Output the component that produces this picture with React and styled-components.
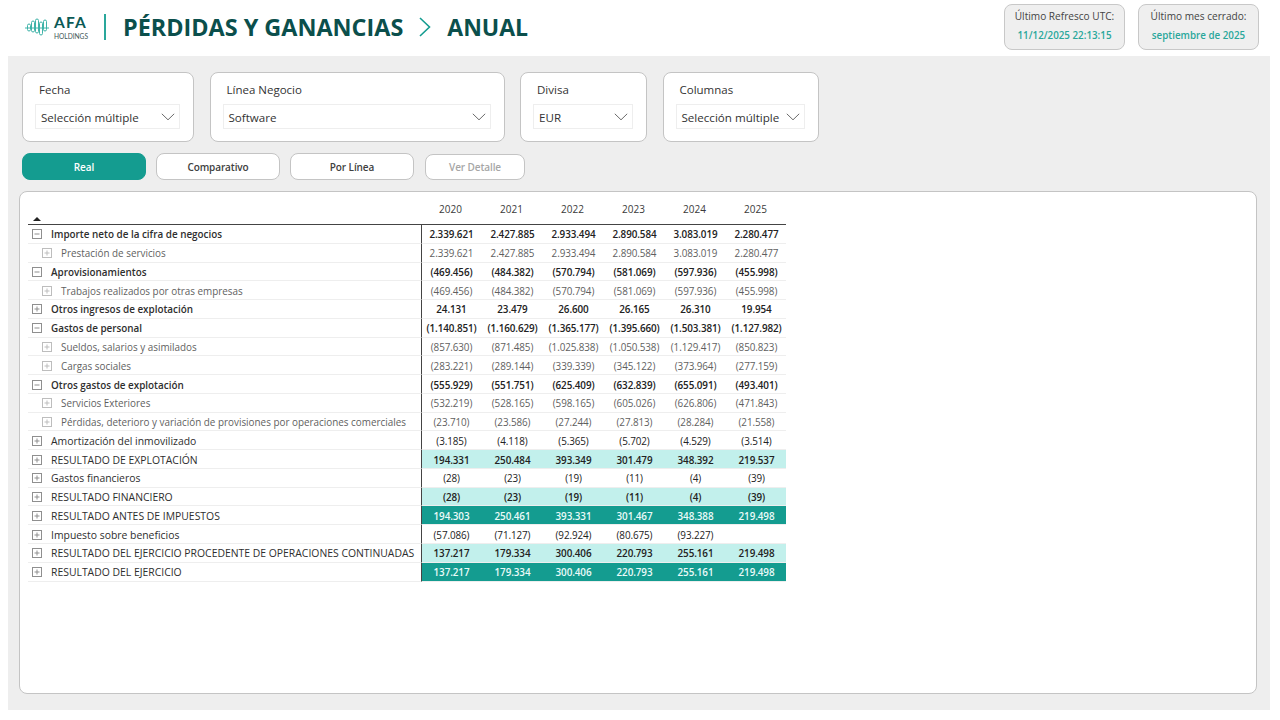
import React from 'react';
import styled, { createGlobalStyle } from 'styled-components';

const GlobalStyle = createGlobalStyle`
html, body {
  margin: 0;
  background: #ffffff;
  font-family: 'Open Sans', 'Noto Sans', sans-serif;
}
* { box-sizing: border-box; }
`

const YEARS = [2020, 2021, 2022, 2023, 2024, 2025];

const rows = [
  { label: 'Importe neto de la cifra de negocios', open: true, bold: true, values: ['2.339.621', '2.427.885', '2.933.494', '2.890.584', '3.083.019', '2.280.477'] },
  { label: 'Prestación de servicios', child: true, values: ['2.339.621', '2.427.885', '2.933.494', '2.890.584', '3.083.019', '2.280.477'] },
  { label: 'Aprovisionamientos', open: true, bold: true, values: ['(469.456)', '(484.382)', '(570.794)', '(581.069)', '(597.936)', '(455.998)'] },
  { label: 'Trabajos realizados por otras empresas', child: true, values: ['(469.456)', '(484.382)', '(570.794)', '(581.069)', '(597.936)', '(455.998)'] },
  { label: 'Otros ingresos de explotación', bold: true, values: ['24.131', '23.479', '26.600', '26.165', '26.310', '19.954'] },
  { label: 'Gastos de personal', open: true, bold: true, values: ['(1.140.851)', '(1.160.629)', '(1.365.177)', '(1.395.660)', '(1.503.381)', '(1.127.982)'] },
  { label: 'Sueldos, salarios y asimilados', child: true, values: ['(857.630)', '(871.485)', '(1.025.838)', '(1.050.538)', '(1.129.417)', '(850.823)'] },
  { label: 'Cargas sociales', child: true, values: ['(283.221)', '(289.144)', '(339.339)', '(345.122)', '(373.964)', '(277.159)'] },
  { label: 'Otros gastos de explotación', open: true, bold: true, values: ['(555.929)', '(551.751)', '(625.409)', '(632.839)', '(655.091)', '(493.401)'] },
  { label: 'Servicios Exteriores', child: true, values: ['(532.219)', '(528.165)', '(598.165)', '(605.026)', '(626.806)', '(471.843)'] },
  { label: 'Pérdidas, deterioro y variación de provisiones por operaciones comerciales', child: true, values: ['(23.710)', '(23.586)', '(27.244)', '(27.813)', '(28.284)', '(21.558)'] },
  { label: 'Amortización del inmovilizado', medium: true, values: ['(3.185)', '(4.118)', '(5.365)', '(5.702)', '(4.529)', '(3.514)'] },
  { label: 'RESULTADO DE EXPLOTACIÓN', medium: true, tone: 'light', values: ['194.331', '250.484', '393.349', '301.479', '348.392', '219.537'] },
  { label: 'Gastos financieros', medium: true, values: ['(28)', '(23)', '(19)', '(11)', '(4)', '(39)'] },
  { label: 'RESULTADO FINANCIERO', medium: true, tone: 'light', values: ['(28)', '(23)', '(19)', '(11)', '(4)', '(39)'] },
  { label: 'RESULTADO ANTES DE IMPUESTOS', medium: true, tone: 'dark', values: ['194.303', '250.461', '393.331', '301.467', '348.388', '219.498'] },
  { label: 'Impuesto sobre beneficios', medium: true, values: ['(57.086)', '(71.127)', '(92.924)', '(80.675)', '(93.227)', ''] },
  { label: 'RESULTADO DEL EJERCICIO PROCEDENTE DE OPERACIONES CONTINUADAS', medium: true, tone: 'light', values: ['137.217', '179.334', '300.406', '220.793', '255.161', '219.498'] },
  { label: 'RESULTADO DEL EJERCICIO', medium: true, tone: 'dark', values: ['137.217', '179.334', '300.406', '220.793', '255.161', '219.498'] },
];

const filters = [
  { title: 'Fecha', value: 'Selección múltiple', width: 172 },
  { title: 'Línea Negocio', value: 'Software', width: 295 },
  { title: 'Divisa', value: 'EUR', width: 127 },
  { title: 'Columnas', value: 'Selección múltiple', width: 156 },
];

// pillars of the logo wave: x, top, height
const wavePillars = [
  [2.5, 6, 7], [6.5, 3, 11], [10.5, 1, 14], [14.5, 4, 13], [18.5, 2, 11],
];

function Logo() {
  return (
    <LogoWrap>
      <svg width="24" height="18" viewBox="0 0 24 18" fill="none" stroke="#3fb3a8" strokeWidth="1">
        {wavePillars.map(([x, y, h]) => (
          <rect key={x} x={x} y={y} width="3" height={h} rx="1.5" />
        ))}
        <path d="M0 10 H24" />
      </svg>
      <LogoText>
        <LogoName>AFA</LogoName>
        <LogoSub>HOLDINGS</LogoSub>
      </LogoText>
    </LogoWrap>
  );
}

function Chevron() {
  return (
    <svg width="14" height="8" viewBox="0 0 14 8" fill="none" stroke="#6b6b6b" strokeWidth="1">
      <path d="M0.8 0.8 L7 6.8 L13.2 0.8" />
    </svg>
  );
}

function Expander({ open, faint }) {
  const color = faint ? '#bdbdbd' : '#8f8f8f';
  return (
    <ExpanderWrap>
      <svg width="10" height="10" viewBox="0 0 10 10" fill="none" stroke={color} strokeWidth="1">
        <rect x="0.5" y="0.5" width="9" height="9" />
        <path d="M2.5 5 H7.5" />
        {!open && <path d="M5 2.5 V7.5" />}
      </svg>
    </ExpanderWrap>
  );
}

export default function App() {
  return (
    <>
      <GlobalStyle />
      <Page>
        <Header>
          <TitleGroup>
            <Logo />
            <Divider />
            <Title>PÉRDIDAS Y GANANCIAS</Title>
            <svg width="12" height="20" viewBox="0 0 12 20" fill="none" stroke="#149c90" strokeWidth="1.6">
              <path d="M1 1 L10.5 10 L1 19" />
            </svg>
            <Title>ANUAL</Title>
          </TitleGroup>
          <StatusGroup>
            <StatusCard>
              <StatusLabel>Último Refresco UTC:</StatusLabel>
              <StatusValue>11/12/2025 22:13:15</StatusValue>
            </StatusCard>
            <StatusCard>
              <StatusLabel>Último mes cerrado:</StatusLabel>
              <StatusValue>septiembre de 2025</StatusValue>
            </StatusCard>
          </StatusGroup>
        </Header>
        <Panel>
          <FilterRow>
            {filters.map(({ title, value, width }) => (
              <FilterCard key={title} $width={width}>
                <FilterTitle>{title}</FilterTitle>
                <FilterSelect>
                  <span>{value}</span>
                  <Chevron />
                </FilterSelect>
              </FilterCard>
            ))}
          </FilterRow>
          <ButtonRow>
            <TabButton $active>Real</TabButton>
            <TabButton>Comparativo</TabButton>
            <TabButton>Por Línea</TabButton>
            <TabButton $disabled>Ver Detalle</TabButton>
          </ButtonRow>
          <TablePanel>
            <Matrix>
              <HeaderRow>
                <SortCell><SortCaret /></SortCell>
                {YEARS.map((year) => <YearCell key={year}>{year}</YearCell>)}
              </HeaderRow>
              {rows.map((row) => (
                <Row key={row.label}>
                  <LabelCell $child={row.child} $bold={row.bold} $medium={row.medium}>
                    <Expander open={row.open} faint={row.child} />
                    <span>{row.label}</span>
                  </LabelCell>
                  <Values $tone={row.tone}>
                    {row.values.map((value, i) => (
                      <ValueCell key={i} $child={row.child} $medium={row.medium} $tone={row.tone}>{value}</ValueCell>
                    ))}
                  </Values>
                </Row>
              ))}
            </Matrix>
          </TablePanel>
        </Panel>
      </Page>
    </>
  );
}

const Page = styled.div`
width: 1280px;
height: 720px;
overflow: hidden;
background: #ffffff;
`
const Header = styled.header`
height: 56px;
display: flex;
justify-content: space-between;
padding: 4px 21px 0 25px;
`
const TitleGroup = styled.div`
display: flex;
align-items: center;
height: 46px;
`
const LogoWrap = styled.div`
display: flex;
align-items: center;
gap: 5px;
`
const LogoText = styled.div`
display: flex;
flex-direction: column;
align-items: flex-start;
gap: 3px;
width: 33px;
padding-top: 1px;
font-family: 'Lato', 'Open Sans', sans-serif;
`
const LogoName = styled.span`
font-size: 15.5px;
line-height: 14px;
font-weight: 700;
letter-spacing: 1.2px;
color: #0b5a56;
`
const LogoSub = styled.span`
font-size: 6.6px;
line-height: 8px;
color: #3c5554;
`
const Divider = styled.div`
width: 2px;
height: 26px;
margin: 0 17px;
background: #2aa79b;
`
const Title = styled.h1`
margin: 0 16px 0 0;
font-size: 23.4px;
font-weight: 700;
color: #0b4f4c;
white-space: nowrap;
&:last-child { margin: 0 0 0 16px; font-size: 23px; }
`
const StatusGroup = styled.div`
display: flex;
gap: 13px;
`
const StatusCard = styled.div`
width: 121px;
height: 46px;
padding-top: 4px;
text-align: center;
background: #efefef;
border: 1px solid #c8c8c8;
border-radius: 8px;
`
const StatusLabel = styled.div`
font-size: 10.1px;
line-height: 14px;
white-space: nowrap;
color: #444444;
`
const StatusValue = styled.div`
margin-top: 6px;
font-size: 9.8px;
line-height: 14px;
font-weight: 600;
color: #2aa79b;
`
const Panel = styled.main`
width: 1262px;
height: 654px;
margin-left: 8px;
padding: 16px 13px 16px 14px;
background: #eeeeee;
`
const FilterRow = styled.div`
display: flex;
gap: 15.5px;
`
const FilterCard = styled.section`
width: ${(p) => p.$width}px;
height: 70px;
padding: 9px 13px 0;
background: #ffffff;
border: 1px solid #c4c4c4;
border-radius: 8px;
`
const FilterTitle = styled.div`
padding-left: 3px;
font-size: 11.5px;
line-height: 15px;
font-weight: 500;
color: #333333;
`
const FilterSelect = styled.div`
display: flex;
align-items: center;
justify-content: space-between;
height: 25px;
margin: 7px 0 0 -1px;
padding: 1px 4px 0 5px;
font-size: 11.6px;
font-weight: 500;
white-space: nowrap;
color: #333333;
border: 1px solid #eeeeee;
`
const ButtonRow = styled.div`
display: flex;
align-items: center;
gap: 10px;
margin-top: 11px;
`
const TabButton = styled.div`
display: flex;
align-items: center;
justify-content: center;
width: ${(p) => (p.$disabled ? 100 : 124)}px;
height: ${(p) => (p.$disabled ? 26 : 27)}px;
margin-left: ${(p) => (p.$disabled ? 1 : 0)}px;
font-size: 10px;
font-weight: 600;
letter-spacing: -0.1px;
color: ${(p) => (p.$active ? '#ffffff' : p.$disabled ? '#a6a6a6' : '#404040')};
background: ${(p) => (p.$active ? '#149c90' : '#ffffff')};
border: 1px solid ${(p) => (p.$active ? '#149c90' : '#c4c4c4')};
border-radius: 8px;
`
const TablePanel = styled.section`
width: 1238px;
height: 503px;
margin: 11px 0 0 -3px;
padding: 0 0 0 8px;
background: #ffffff;
border: 1px solid #c4c4c4;
border-radius: 8px;
`
const Matrix = styled.div`
width: 758px;
`
const HeaderRow = styled.div`
display: grid;
grid-template-columns: 393px repeat(6, 61px);
height: 33px;
overflow: hidden;
border-bottom: 1px solid #444444;
`
const SortCell = styled.div`
display: flex;
align-items: flex-end;
padding: 0 0 3px 5px;
`
const SortCaret = styled.span`
width: 0;
height: 0;
border-left: 4px solid transparent;
border-right: 4px solid transparent;
border-bottom: 4px solid #222222;
`
const YearCell = styled.div`
padding: 10px 2px 0 0;
text-align: center;
font-size: 10px;
font-weight: 500;
color: #3a3a3a;
`
const Row = styled.div`
display: grid;
grid-template-columns: 394px 364px;
height: 18.78px;
`
const LabelCell = styled.div`
display: flex;
align-items: center;
padding: 1px 0 0 ${(p) => (p.$child ? 14 : 4)}px;
white-space: nowrap;
border-bottom: 1px solid #eeeeee;
border-right: 1px solid #444444;
font-size: ${(p) => (p.$medium ? 10.4 : 9.9)}px;
font-weight: ${(p) => (p.$bold ? 600 : p.$medium ? 500 : 400)};
color: ${(p) => (p.$child ? '#5f5f5f' : '#2e2e2e')};
`
const ExpanderWrap = styled.span`
display: flex;
margin-right: 9px;
`
const Values = styled.div`
display: grid;
grid-template-columns: repeat(6, 61px);
overflow: hidden;
border-bottom: 1px solid #eeeeee;
background: ${(p) => (p.$tone === 'dark' ? '#149c90' : p.$tone === 'light' ? '#c2f0ec' : 'transparent')};
`
const ValueCell = styled.div`
display: flex;
align-items: center;
justify-content: center;
padding: 1px 2px 0 0;
white-space: nowrap;
font-size: 9.9px;
letter-spacing: -0.1px;
font-weight: ${(p) => (p.$child ? 400 : p.$medium && !p.$tone ? 500 : 600)};
color: ${(p) => (p.$tone === 'dark' ? '#eafaf8' : p.$child ? '#5f5f5f' : '#222222')};
`
